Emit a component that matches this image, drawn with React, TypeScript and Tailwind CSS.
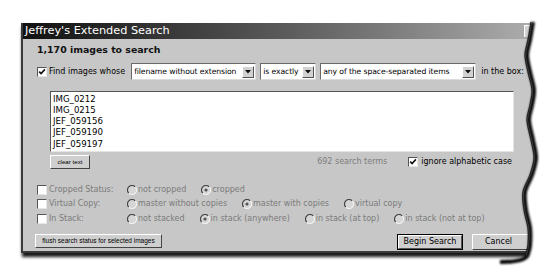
import React from "react";

const WAVE: [number, number][] = [
  [531, 22], [528, 40], [525, 55], [528, 72], [532, 90], [530, 105], [527, 120],
  [531, 140], [534, 158], [530, 175], [523, 192], [524, 210], [528, 228], [528, 245], [526, 254],
];

// catmull-rom through the points, as cubic segments
function smooth(pts: [number, number][], dx = 0) {
  const p = pts.map(([x, y]) => [x + dx, y] as [number, number]);
  let d = `M${p[0][0]},${p[0][1]}`;
  for (let i = 0; i < p.length - 1; i++) {
    const p0 = p[i - 1] || p[i];
    const p1 = p[i];
    const p2 = p[i + 1];
    const p3 = p[i + 2] || p2;
    const c1 = [p1[0] + (p2[0] - p0[0]) / 6, p1[1] + (p2[1] - p0[1]) / 6];
    const c2 = [p2[0] - (p3[0] - p1[0]) / 6, p2[1] - (p3[1] - p1[1]) / 6];
    d += ` C${c1[0]},${c1[1]} ${c2[0]},${c2[1]} ${p2[0]},${p2[1]}`;
  }
  return d;
}

function Check({ checked = false }: { checked?: boolean }) {
  return (
    <span className="relative inline-block w-[10px] h-[10px] shrink-0 bg-white border border-t-[#555] border-l-[#555] border-r-[#e6e6e6] border-b-[#e6e6e6]">
      {checked && (
        <svg viewBox="0 0 8 8" className="absolute inset-0 w-[8px] h-[8px]">
          <path d="M1.2 3.6 L3.1 5.6 L6.9 1.4" stroke="#111" strokeWidth="1.6" fill="none" />
        </svg>
      )}
    </span>
  );
}

function Radio({ on = false }: { on?: boolean }) {
  return (
    <svg viewBox="0 0 10 10" className="w-[10px] h-[10px] shrink-0">
      <circle cx="5" cy="5" r="4" fill="#d6d6d6" />
      <path d="M8.2 1.8 A4.5 4.5 0 0 0 1.8 8.2" stroke="#444" strokeWidth="1.2" fill="none" />
      <path d="M1.8 8.2 A4.5 4.5 0 0 0 8.2 1.8" stroke="#f4f4f4" strokeWidth="1.2" fill="none" />
      {on && <circle cx="5" cy="5" r="1.6" fill="#555" />}
    </svg>
  );
}

function Select({ label, w }: { label: string; w: string }) {
  return (
    <div className={`flex items-center h-[17px] ${w} bg-white border border-t-[#6a6a6a] border-l-[#6a6a6a] border-r-[#dcdcdc] border-b-[#dcdcdc] pl-[2px] pr-[1px]`}>
      <span className="flex-1 whitespace-nowrap overflow-hidden text-[7.7px] tracking-[-0.1px]">{label}</span>
      <span className="flex items-center justify-center w-[12px] h-[12px] shrink-0 bg-[#d2d2d2] border border-t-white border-l-white border-r-[#555] border-b-[#555]">
        <svg viewBox="0 0 6 4" className="w-[6px] h-[4px]">
          <path d="M0 0 H6 L3 3.5 Z" fill="#111" />
        </svg>
      </span>
    </div>
  );
}

function Opt({ label, on = false }: { label: string; on?: boolean }) {
  return (
    <span className="flex items-center gap-[1px]">
      <Radio on={on} />
      <span>{label}</span>
    </span>
  );
}

const ROWS = [
  { label: "Cropped Status:", opts: [["not cropped", false], ["cropped", true]] },
  { label: "Virtual Copy:", opts: [["master without copies", false], ["master with copies", true], ["virtual copy", false]] },
  { label: "In Stack:", opts: [["not stacked", false], ["in stack (anywhere)", true], ["in stack (at top)", false], ["in stack (not at top)", false]] },
] as const;

export default function App() {
  return (
    <div className="relative w-[550px] h-[276px] overflow-hidden bg-white pl-[21px] pt-[23px] font-['DejaVu_Sans',sans-serif] text-[8px] text-black">
      <div className="w-[520px] h-[230px] bg-[#c7c7c7] border-l-2 border-b-2 border-[#3a3a3a] shadow-[1px_4px_3px_rgba(0,0,0,0.9)] flex flex-col">
        <div className="flex items-center h-[16px] bg-gradient-to-r from-[#121212] via-[#5a5a5a] to-[#b0b0b0] pl-[2px]">
          <span className="text-white text-[11.3px] leading-none">Jeffrey's Extended Search</span>
          <span className="ml-auto mr-[9px] w-[8px] h-[12px] bg-[#d4d4d4] border-l border-t border-white" />
        </div>

        <div className="flex flex-col pl-[14px] pt-[4px]">
          <div className="h-[14px] leading-[14px] text-[9.4px] font-bold text-[#111]">1,170 images to search</div>

          <div className="mt-[6px] flex items-center h-[17px]">
            <Check checked />
            <span className="ml-[2px]">Find images whose</span>
            <div className="ml-[6px] flex items-center gap-[4px]">
              <Select label="filename without extension" w="w-[125px]" />
              <Select label="is exactly" w="w-[56px]" />
              <Select label="any of the space-separated items" w="w-[156px]" />
            </div>
            <span className="ml-[5px]">in the box:</span>
          </div>

          <div className="mt-[11px] ml-[13px] w-[464px] h-[61px] bg-white border border-t-[#555] border-l-[#555] border-r-[#e4e4e4] border-b-[#e4e4e4] pl-[2px] pt-[1.5px] text-[8.6px] leading-[11.3px]">
            <div>IMG_0212</div>
            <div>IMG_0215</div>
            <div>JEF_059156</div>
            <div>JEF_059190</div>
            <div>JEF_059197</div>
          </div>

          <div className="mt-[3px] ml-[13px] w-[464px] flex items-center">
            <button className="w-[40px] h-[14px] bg-[#cfcfcf] border border-t-white border-l-white border-r-[#444] border-b-[#444] font-['Liberation_Sans',sans-serif] text-[6.2px] leading-none">
              clear text
            </button>
            <span className="ml-auto text-[#7d7d7d]">692 search terms</span>
            <span className="ml-[21px] flex items-center gap-[3px] pr-[2px]">
              <Check checked />
              <span>ignore alphabetic case</span>
            </span>
          </div>

          <div className="mt-[14px] flex flex-col text-[#7b7b7b]">
            {ROWS.map((r) => (
              <div key={r.label} className="flex items-center h-[14.3px]">
                <span className="w-[90px] flex items-center gap-[2px]">
                  <Check />
                  <span>{r.label}</span>
                </span>
                <span className="flex items-center gap-[15px]">
                  {r.opts.map(([t, on]) => (
                    <Opt key={t} label={t} on={on} />
                  ))}
                </span>
              </div>
            ))}
          </div>

          <div className="mt-[8px] flex items-start">
            <button className="-ml-[2px] w-[127px] h-[14px] bg-[#cfcfcf] border border-t-white border-l-white border-r-[#444] border-b-[#444] font-['Liberation_Sans',sans-serif] text-[6.5px] leading-none">
              flush search status for selected images
            </button>
            <button className="ml-auto w-[66px] h-[16px] border border-black">
              <span className="flex items-center justify-center w-full h-full bg-[#cfcfcf] border border-t-white border-l-white border-r-[#555] border-b-[#555]">
                Begin Search
              </span>
            </button>
            <button className="ml-[9px] mr-[9px] w-[60px] h-[16px] bg-[#cfcfcf] border border-t-white border-l-white border-r-[#444] border-b-[#444] pr-[7px]">
              Cancel
            </button>
          </div>
        </div>
      </div>

      <svg className="absolute inset-0 w-[550px] h-[276px] pointer-events-none" viewBox="0 0 550 276">
        <defs>
          <filter id="blur" x="-50%" y="-10%" width="200%" height="120%">
            <feGaussianBlur stdDeviation="1.2" />
          </filter>
        </defs>
        <path d={`${smooth(WAVE)} L526,272 L550,272 L550,22 Z`} fill="white" />
        <path d={`${smooth(WAVE, 2)} Q527,262 500,262`} stroke="#000" strokeWidth="4" fill="none" filter="url(#blur)" />
        <path d={smooth(WAVE)} stroke="#222" strokeWidth="1.2" fill="none" />
      </svg>
    </div>
  );
}
